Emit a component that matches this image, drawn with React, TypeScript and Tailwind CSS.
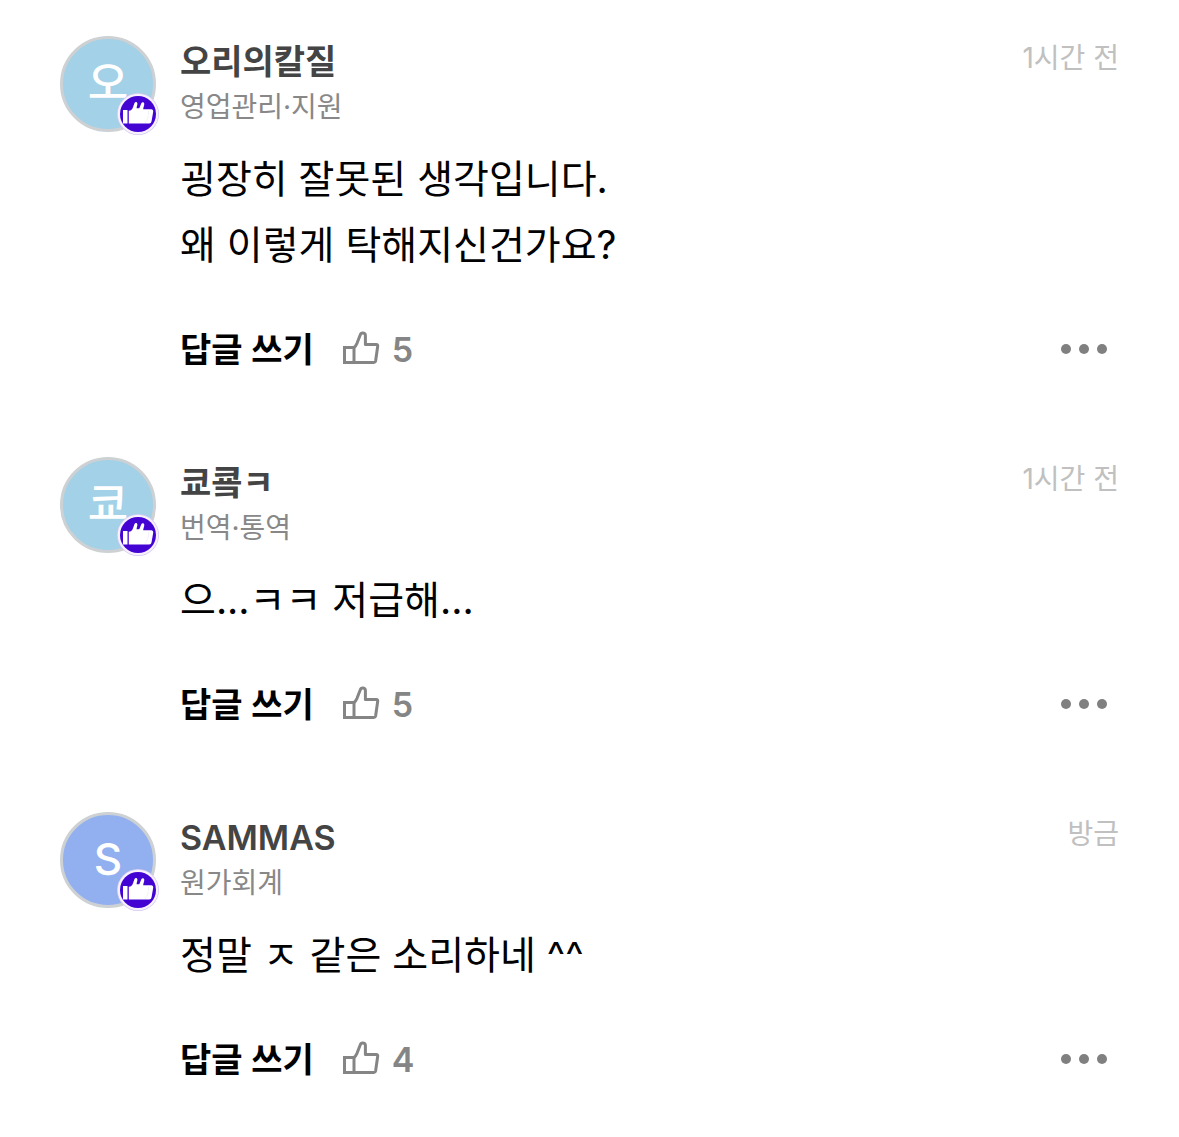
type Comment = {
  name: string;
  initial: string;
  job: string;
  time: string;
  lines: string[];
  likes: number;
  color: string;
};

const comments: Comment[] = [
  {
    name: "오리의칼질",
    initial: "오",
    job: "영업관리·지원",
    time: "1시간 전",
    lines: ["굉장히 잘못된 생각입니다.", "왜 이렇게 탁해지신건가요?"],
    likes: 5,
    color: "bg-[#a2d1e8]",
  },
  {
    name: "쿄\uCFDCㅋ",
    initial: "쿄",
    job: "번역·통역",
    time: "1시간 전",
    lines: ["으...ㅋㅋ 저급해..."],
    likes: 5,
    color: "bg-[#a2d1e8]",
  },
  {
    name: "SAMMAS",
    initial: "S",
    job: "원가회계",
    time: "방금",
    lines: ["정말 ㅈ 같은 소리하네 ^^"],
    likes: 4,
    color: "bg-[#92b0f0]",
  },
];

const ThumbBadge = () => (
  <svg viewBox="0 0 42 42" className="absolute -right-[3px] -bottom-[3px] size-[42px]" aria-hidden="true">
    <circle cx="21" cy="21" r="21" fill="#d6c9f2" />
    <circle cx="21" cy="21" r="20.300" fill="#f7f1fd" />
    <circle cx="21" cy="21" r="18" fill="#4303d3" />
    <path d="M6 17h4.500v13.500H6z" fill="#fff" />
    <path
      d="M11.800 17.800c2.300-.3 3.400-1.300 4.200-3.500l1.400-4c.7-1.800 3-1.500 3 .5-.1 1.600-.8 3-.8 4.500h2.700c.7-1.600 1.300-3.300 2-5 .7-1.800 3-1.400 3 .6-.1 1.800-1.100 3.600-1.100 5.400h8c1.400 0 2.200 1 2 2.400L34.600 28c-.3 1.700-1 2.500-2.500 2.500H11.800z"
      fill="#fff"
    />
    <path d="M31.500 18c.5 4-1 9-3.500 12" fill="none" stroke="#ebe6f5" strokeWidth="0.6" />
  </svg>
);

const ThumbIcon = () => (
  <svg
    viewBox="0 0 38 36"
    className="h-9 w-[38px]"
    fill="none"
    stroke="currentColor"
    strokeWidth="3"
    aria-hidden="true"
  >
    <path d="M2.500 16.500H12V31.500H2.500z" />
    <path
      d="M12 16.500c1.500-1.200 2.300-2.600 3-4.200L18.200 4c.9-2.900 5.200-2.500 5.200.6v8.900h10.800c1.200 0 1.700.8 1.500 1.800L33.600 30c-.2 1-.7 1.500-1.700 1.500H12"
      strokeLinejoin="round"
    />
  </svg>
);

const CommentItem = ({ comment }: { comment: Comment }) => {
  return (
    <article className="flex gap-6">
      <div className="relative size-24 shrink-0">
        <div
          className={`flex size-24 items-center justify-center rounded-full border-3 border-[#cdd1d3] pb-0.5 text-[44px] font-medium text-white ${comment.color}`}
        >
          {comment.initial}
        </div>
        <ThumbBadge />
      </div>

      <div className="min-w-0 flex-1">
        <header className="flex justify-between">
          <div>
            <h2 className="mt-1 text-[34px] leading-[44px] font-semibold text-[#444]">{comment.name}</h2>
            <p className="text-[28px] leading-[46px] text-[#888]">{comment.job}</p>
          </div>
          <time className="text-[28px] leading-[44px] text-[#c0c0c0]">{comment.time}</time>
        </header>

        <div className="mt-4 text-[39px] leading-[66px] text-black">
          {comment.lines.map((line) => (
            <p key={line}>{line}</p>
          ))}
        </div>

        <footer className="mt-[47px] flex h-12 items-center text-[34px] font-semibold">
          <button className="text-black">답글 쓰기</button>
          <button className="ml-7 flex items-center gap-3 text-[#858585]" aria-label="좋아요">
            <ThumbIcon />
            {comment.likes}
          </button>
          <button className="mr-3 ml-auto flex gap-2 text-[#808080]" aria-label="더보기">
            <span className="size-[10px] rounded-full bg-current" />
            <span className="size-[10px] rounded-full bg-current" />
            <span className="size-[10px] rounded-full bg-current" />
          </button>
        </footer>
      </div>
    </article>
  );
};

const App = () => {
  return (
    <main
      lang="ko"
      className="flex flex-col gap-[84px] bg-white px-15 py-9 font-['Inter','Noto_Sans_CJK_KR',sans-serif]"
    >
      {comments.map((comment) => (
        <CommentItem key={comment.name} comment={comment} />
      ))}
    </main>
  );
};

export default App;
